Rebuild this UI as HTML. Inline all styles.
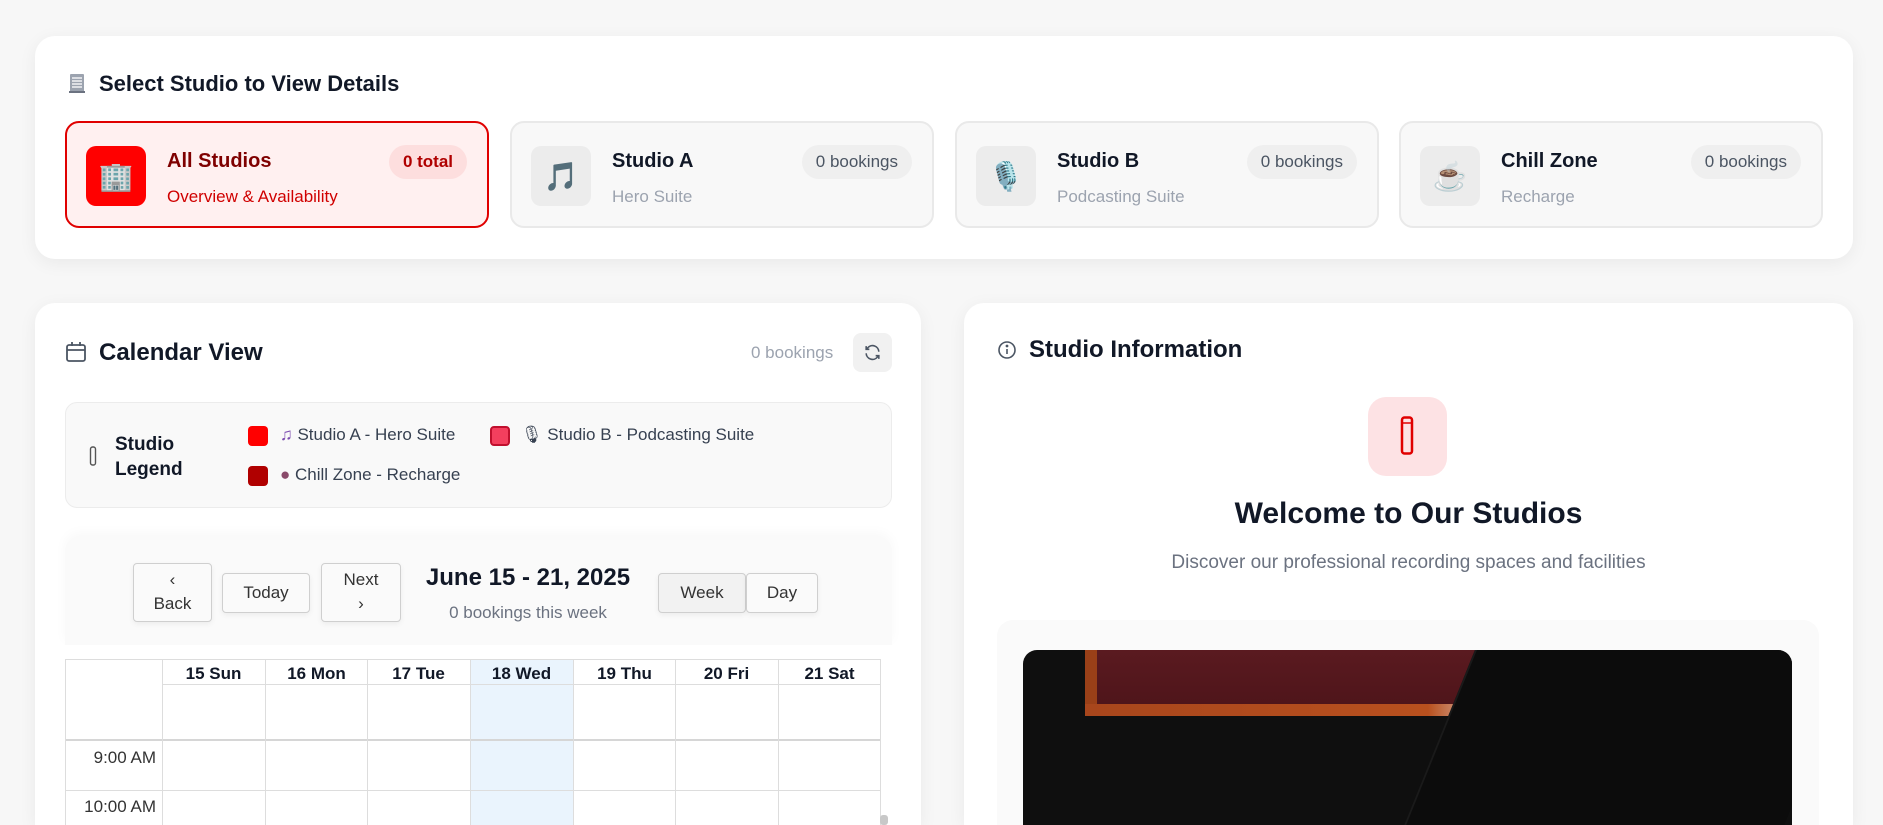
<!DOCTYPE html>
<html><head><meta charset="utf-8"><style>
*{box-sizing:border-box;margin:0;padding:0}
html,body{width:1883px;height:825px;overflow:hidden}
body{background:#f7f7f7;font-family:"Liberation Sans","Noto Sans CJK SC",sans-serif;color:#111827}
#w{position:relative;width:1883px;height:825px;overflow:hidden}
.abs{position:absolute}
.panel{position:absolute;background:#fff;border-radius:20px;box-shadow:0 4px 18px rgba(0,0,0,.06)}
.h{font-weight:bold;color:#111827}
.card{position:absolute;top:121px;width:424px;height:107px;border:2px solid #e9e9e9;border-radius:14px;background:#f8f8f8}
.card .ic{position:absolute;left:19px;top:23px;width:60px;height:60px;border-radius:10px;background:#ececec;display:flex;align-items:center;justify-content:center;font-size:28px}
.card .t{position:absolute;left:100px;top:27px;font-size:20px;font-weight:bold}
.card .s{position:absolute;left:100px;top:64px;font-size:17px;color:#9ca3af}
.card .b{position:absolute;right:20px;top:22px;height:34px;padding:0 14px;border-radius:17px;background:#efefef;color:#4b5563;font-size:17px;line-height:34px}
.btn{position:absolute;border:1px solid #cfcfcf;border-radius:4px;background:#fafafa;font-size:17px;color:#333;text-align:center;box-shadow:0 2px 6px rgba(0,0,0,.06)}
.vl{position:absolute;top:659px;height:166px;width:1px;background:#ddd}
.hl{position:absolute;left:65px;width:815px;height:1px;background:#ddd}
.dh{position:absolute;top:664px;font-size:17px;font-weight:bold;width:103px;text-align:center}
.sq{position:absolute;width:20px;height:20px;border-radius:4px}
.lt{position:absolute;font-size:17px;color:#374151}
</style></head><body><div id="w">

<div class="panel" style="left:35px;top:36px;width:1818px;height:223px"></div>
<svg class="abs" style="left:68px;top:73px" width="18" height="21" viewBox="0 0 18 21"><rect x="2" y="1" width="14" height="18" fill="#9ca3af" rx="1"/><g stroke="#fff" stroke-width="1.3"><line x1="4" y1="5" x2="14" y2="5"/><line x1="4" y1="8" x2="14" y2="8"/><line x1="4" y1="11" x2="14" y2="11"/><line x1="4" y1="14" x2="14" y2="14"/></g><rect x="1" y="18" width="16" height="2" fill="#6b7280"/></svg>
<div class="abs h" style="left:99px;top:71px;font-size:22px">Select Studio to View Details</div>

<div class="card" style="left:65px;border-color:#e00000;background:#fff0f0">
<div class="ic" style="background:#ff0000">🏢</div>
<div class="t" style="color:#7f0000">All Studios</div>
<div class="s" style="color:#d00000">Overview &amp; Availability</div>
<div class="b" style="background:#fddede;color:#b00000;font-weight:bold">0 total</div></div>
<div class="card" style="left:510px"><div class="ic" style="color:#7c4db0">🎵</div><div class="t">Studio A</div><div class="s">Hero Suite</div><div class="b">0 bookings</div></div>
<div class="card" style="left:955px"><div class="ic">🎙️</div><div class="t">Studio B</div><div class="s">Podcasting Suite</div><div class="b">0 bookings</div></div>
<div class="card" style="left:1399px"><div class="ic">☕</div><div class="t">Chill Zone</div><div class="s">Recharge</div><div class="b">0 bookings</div></div>

<div class="panel" style="left:35px;top:303px;width:886px;height:522px;border-radius:20px 20px 0 0"></div>
<svg class="abs" style="left:65px;top:341px" width="22" height="22" viewBox="0 0 22 22" fill="none" stroke="#4b5563" stroke-width="1.8"><rect x="2" y="4" width="18" height="16" rx="2"/><line x1="2" y1="9" x2="20" y2="9"/><line x1="7" y1="1" x2="7" y2="5"/><line x1="15" y1="1" x2="15" y2="5"/></svg>
<div class="abs h" style="left:99px;top:339px;font-size:24px">Calendar View</div>
<div class="abs" style="left:751px;top:343px;font-size:17px;color:#9ca3af">0 bookings</div>
<div class="abs" style="left:853px;top:333px;width:39px;height:39px;border-radius:8px;background:#f1f1f1"></div>
<svg class="abs" style="left:863px;top:343px" width="19" height="19" viewBox="0 0 24 24" fill="none" stroke="#4b5563" stroke-width="2"><path d="M20 11a8 8 0 0 0-14-5l-2 2M4 4v4h4M4 13a8 8 0 0 0 14 5l2-2M20 20v-4h-4"/></svg>

<div class="abs" style="left:65px;top:402px;width:827px;height:106px;border:1px solid #ececec;border-radius:12px;background:#f9f9f9"></div>
<svg class="abs" style="left:89px;top:446px" width="8" height="20" viewBox="0 0 8 20"><rect x="1.5" y="1" width="5" height="18" rx="2" fill="none" stroke="#555" stroke-width="1.4"/></svg>
<div class="abs h" style="left:115px;top:432px;font-size:19px;line-height:25px">Studio<br>Legend</div>
<div class="sq" style="left:248px;top:426px;background:#ff0000"></div>
<div class="lt" style="left:280px;top:425px"><span style="color:#7c4db0">♫</span> Studio A - Hero Suite</div>
<div class="sq" style="left:490px;top:426px;background:#f43f5e;border:2px solid #c0102e"></div>
<div class="lt" style="left:521px;top:425px">🎙 Studio B - Podcasting Suite</div>
<div class="sq" style="left:248px;top:466px;background:#b00000"></div>
<div class="lt" style="left:280px;top:465px"><span style="color:#8a4a6a">●</span> Chill Zone - Recharge</div>

<div class="abs" style="left:65px;top:537px;width:827px;height:108px;background:#fafafa;border-radius:14px 14px 0 0;box-shadow:0 -4px 12px rgba(0,0,0,.03)"></div>
<div class="btn" style="left:133px;top:563px;width:79px;height:59px;line-height:24px;padding-top:4px">‹<br>Back</div>
<div class="btn" style="left:222px;top:573px;width:88px;height:40px;line-height:38px">Today</div>
<div class="btn" style="left:321px;top:563px;width:80px;height:59px;line-height:24px;padding-top:4px">Next<br>›</div>
<div class="abs h" style="left:420px;top:564px;width:216px;text-align:center;font-size:24px">June 15 - 21, 2025</div>
<div class="abs" style="left:420px;top:603px;width:216px;text-align:center;font-size:17px;color:#6b7280">0 bookings this week</div>
<div class="btn" style="left:658px;top:573px;width:88px;height:40px;line-height:38px;background:#f2f2f2">Week</div>
<div class="btn" style="left:746px;top:573px;width:72px;height:40px;line-height:38px">Day</div>

<div class="abs" style="left:65px;top:645px;width:827px;height:180px;background:#fff"></div>
<div class="abs" style="left:470px;top:659px;width:103px;height:166px;background:#eaf4fd"></div>
<div class="hl" style="top:659px"></div>
<div class="hl" style="top:684px;left:162px;width:718px"></div>
<div class="hl" style="top:739px;height:2px;background:#d6d6d6"></div>
<div class="hl" style="top:790px"></div>
<div class="vl" style="left:65px"></div>
<div class="vl" style="left:162px"></div><div class="vl" style="left:265px"></div><div class="vl" style="left:367px"></div><div class="vl" style="left:470px"></div><div class="vl" style="left:573px"></div><div class="vl" style="left:675px"></div><div class="vl" style="left:778px"></div><div class="vl" style="left:880px"></div>
<div class="abs" style="left:880px;top:815px;width:8px;height:10px;background:#c8c8c8;border-radius:3px"></div>
<div class="dh" style="left:162px">15 Sun</div><div class="dh" style="left:265px">16 Mon</div><div class="dh" style="left:367px">17 Tue</div><div class="dh" style="left:470px">18 Wed</div><div class="dh" style="left:573px">19 Thu</div><div class="dh" style="left:675px">20 Fri</div><div class="dh" style="left:778px">21 Sat</div>
<div class="abs" style="left:65px;top:748px;width:91px;text-align:right;font-size:17px;color:#333">9:00 AM</div>
<div class="abs" style="left:65px;top:797px;width:91px;text-align:right;font-size:17px;color:#333">10:00 AM</div>

<div class="panel" style="left:964px;top:303px;width:889px;height:522px;border-radius:20px 20px 0 0"></div>
<svg class="abs" style="left:997px;top:340px" width="20" height="20" viewBox="0 0 20 20" fill="none" stroke="#4b5563" stroke-width="1.6"><circle cx="10" cy="10" r="8"/><line x1="10" y1="9" x2="10" y2="14"/><circle cx="10" cy="6" r=".6" fill="#4b5563"/></svg>
<div class="abs h" style="left:1029px;top:336px;font-size:24px">Studio Information</div>
<div class="abs" style="left:1368px;top:397px;width:79px;height:79px;border-radius:18px;background:#fde2e4"></div>
<svg class="abs" style="left:1396px;top:416px" width="22" height="40" viewBox="0 0 22 40"><rect x="6" y="1.5" width="10" height="36" rx="2.5" fill="none" stroke="#e00000" stroke-width="2.5"/><line x1="6" y1="7" x2="16" y2="7" stroke="#e00000" stroke-width="1.5"/></svg>
<div class="abs h" style="left:964px;top:497px;width:889px;text-align:center;font-size:30px">Welcome to Our Studios</div>
<div class="abs" style="left:964px;top:552px;width:889px;text-align:center;font-size:19px;color:#6b7280">Discover our professional recording spaces and facilities</div>
<div class="abs" style="left:997px;top:620px;width:822px;height:205px;background:#fafafa;border-radius:16px 16px 0 0"></div>
<div class="abs" style="left:1023px;top:650px;width:769px;height:175px;border-radius:14px 14px 0 0;background:#0f0f0f;overflow:hidden">
<div class="abs" style="left:62px;top:0;width:520px;height:64px;background:linear-gradient(#5a1a20,#4d1419)"></div>
<div class="abs" style="left:62px;top:0;width:12px;height:64px;background:#9a4018"></div>
<div class="abs" style="left:62px;top:54px;width:490px;height:12px;background:linear-gradient(90deg,#a8461c,#b8501e 70%,#e8e8e8 85%,#a0a0a0)"></div>
<div class="abs" style="left:460px;top:-20px;width:380px;height:260px;background:#0c0c0c;transform:skewX(-22deg);transform-origin:left top;border-left:2px solid #1a1a1a"></div>
</div>
</div></body></html>
